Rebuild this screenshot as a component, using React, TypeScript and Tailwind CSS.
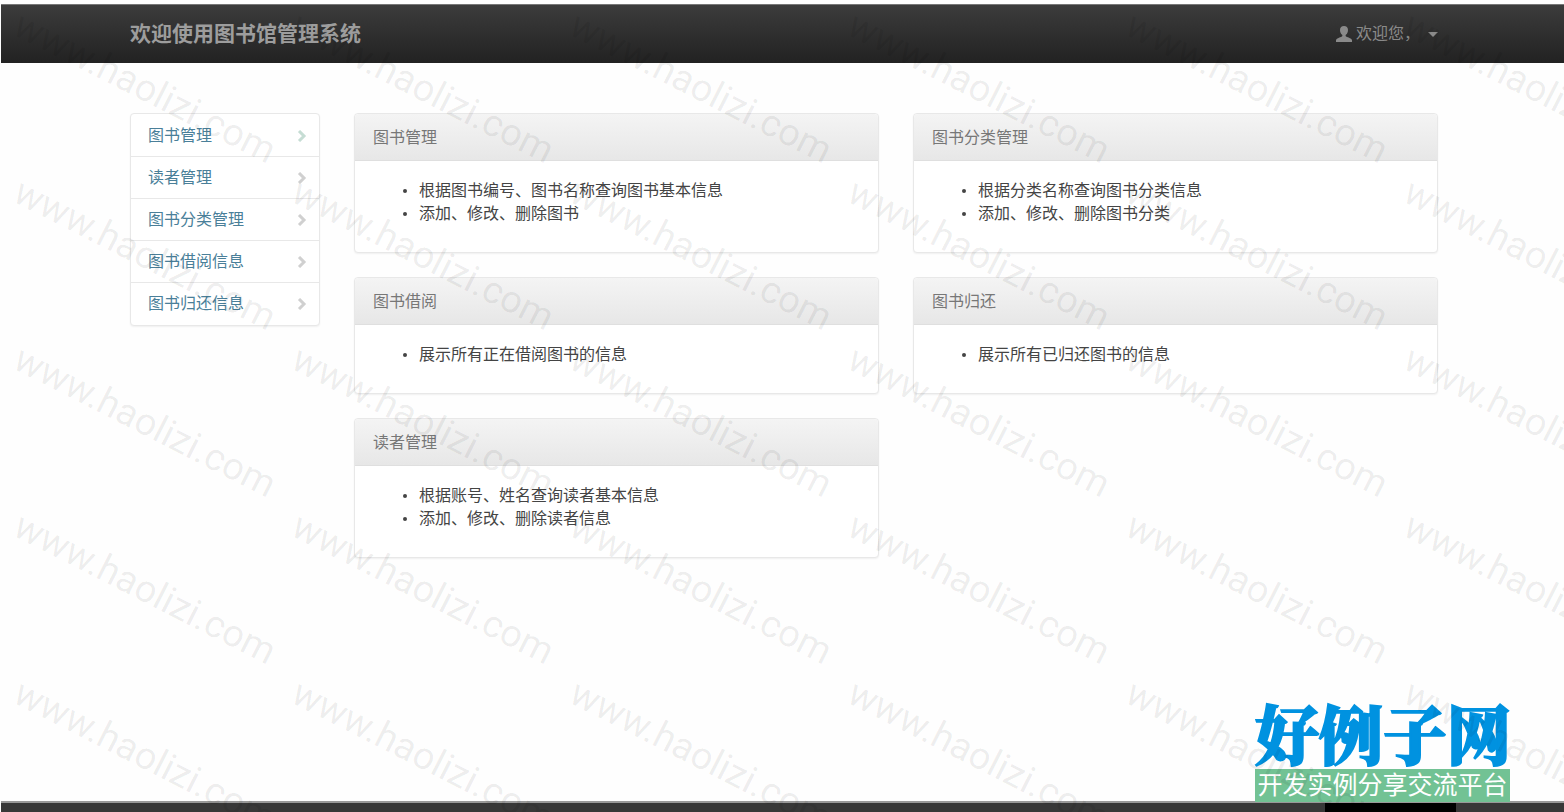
const navItems = ["图书管理", "读者管理", "图书分类管理", "图书借阅信息", "图书归还信息"];

const panels = [
  { title: "图书管理", items: ["根据图书编号、图书名称查询图书基本信息", "添加、修改、删除图书"] },
  { title: "图书分类管理", items: ["根据分类名称查询图书分类信息", "添加、修改、删除图书分类"] },
  { title: "图书借阅", items: ["展示所有正在借阅图书的信息"] },
  { title: "图书归还", items: ["展示所有已归还图书的信息"] },
  { title: "读者管理", items: ["根据账号、姓名查询读者基本信息", "添加、修改、删除读者信息"] },
];

function UserIcon() {
  return (
    <svg viewBox="0 0 16 16" className="h-4 w-4" fill="currentColor" aria-hidden="true">
      <path d="M8 0C5.500 0 4 1.500 4 3.900c0 2 .8 3.900 2.100 4.900.4.400.4 1.200-.1 1.600-.5.400-1.500.700-2.600 1.200C1.400 12.500.1 13.200 0 14.300V16h16v-1.700c-.1-1.100-1.400-1.800-3.400-2.700-1.100-.5-2.100-.8-2.600-1.200-.5-.4-.5-1.200-.1-1.600C11.200 7.800 12 5.900 12 3.900 12 1.500 10.500 0 8 0z" />
    </svg>
  );
}

function ChevronIcon() {
  return (
    <svg viewBox="0 0 10 12" className="h-3 w-[10px]" fill="none" stroke="currentColor" strokeWidth="3" aria-hidden="true">
      <path d="M2 1l5 5-5 5" />
    </svg>
  );
}

function Panel({ title, items }: { title: string; items: string[] }) {
  return (
    <section className="rounded border border-[#e8e8e8] bg-white shadow-[0_1px_2px_rgba(0,0,0,0.06)]">
      <h2 className="rounded-t border-b border-[#dfdfdf] bg-linear-to-b from-[#f4f4f4] to-[#e7e7e7] px-[18px] pt-3 pb-[11px] text-base leading-[23px] text-[#777]">
        {title}
      </h2>
      <ul className="pt-[18px] pr-[18px] pb-[27px] pl-12 text-base leading-[23px] text-[#444]">
        {items.map((item) => (
          <li key={item} className="flex items-center gap-3">
            <span aria-hidden="true" className="h-1 w-1 shrink-0 rounded-full bg-[#444]" />
            <span>{item}</span>
          </li>
        ))}
      </ul>
    </section>
  );
}

function Watermark() {
  return (
    <div
      aria-hidden="true"
      className="pointer-events-none absolute inset-0 z-10 grid auto-rows-[167px] grid-cols-[repeat(6,278px)] content-start overflow-hidden pt-1 pl-[26px] font-['Roboto'] text-[38px] leading-10 text-black/7 select-none"
    >
      {Array.from({ length: 30 }, (_, i) => (
        <span key={i} className="origin-top-left rotate-[27deg] whitespace-nowrap">
          www.haolizi.com
        </span>
      ))}
    </div>
  );
}

export default function App() {
  return (
    <div className="relative flex min-h-screen flex-col overflow-hidden bg-[#fefefe] pt-1 pl-px font-['Liberation_Sans','Noto_Sans_CJK_SC',sans-serif]">
      <header className="border-t border-[#777] bg-linear-to-b from-[#3c3c3c] to-[#222] pl-[3px]">
        <div className="mx-auto flex h-[58px] w-full max-w-[1308px] items-center justify-between text-[#9d9d9d]">
          <h1 className="text-[21px] leading-7 font-bold">欢迎使用图书馆管理系统</h1>
          <button type="button" className="flex items-center gap-1 text-base leading-6 text-[#8a8a8a]">
            <UserIcon />
            <span>欢迎您，</span>
            <svg viewBox="0 0 10 5" className="ml-1 h-[5px] w-[10px]" fill="currentColor" aria-hidden="true">
              <path d="M0 0h10L5 5z" />
            </svg>
          </button>
        </div>
      </header>

      <main className="flex-1 pt-[50px] pb-16 pl-[3px]">
        <div className="mx-auto grid w-full max-w-[1308px] grid-cols-[190px_minmax(0,1fr)] items-start gap-[34px]">
          <nav className="divide-y divide-[#e8e8e8] rounded border border-[#e8e8e8] bg-white pt-px shadow-[0_1px_2px_rgba(0,0,0,0.06)]">
            {navItems.map((item, i) => (
              <a
                key={item}
                href="#"
                className="flex items-center justify-between py-[9px] pr-3 pl-[17px] text-base leading-[23px] text-[#4a7f99] last:pb-[10px]"
              >
                {item}
                <span className={i === 0 ? "text-[#c6ddd4]" : "text-[#d0d0d0]"}>
                  <ChevronIcon />
                </span>
              </a>
            ))}
          </nav>

          <div className="grid grid-cols-2 gap-x-[34px] gap-y-6">
            {panels.map((panel) => (
              <Panel key={panel.title} title={panel.title} items={panel.items} />
            ))}
          </div>
        </div>
      </main>

      <footer className="flex h-[11px] justify-end border-t-2 border-[#999] bg-[#383838] pr-[108px]">
        <div className="w-[131px] bg-black" />
      </footer>

      <div className="absolute right-[54px] bottom-[10px] flex w-[255px] flex-col gap-1">
        <strong className="text-center font-['Noto_Serif_CJK_SC','Noto_Sans_CJK_SC',serif] text-[64px] leading-[68px] font-black whitespace-nowrap text-[#0092e0] [-webkit-text-stroke:2px_#0092e0]">
          好例子网
        </strong>
        <span className="bg-[#72c294] text-center text-[25px] leading-[33px] whitespace-nowrap text-white">
          开发实例分享交流平台
        </span>
      </div>

      <Watermark />
    </div>
  );
}
